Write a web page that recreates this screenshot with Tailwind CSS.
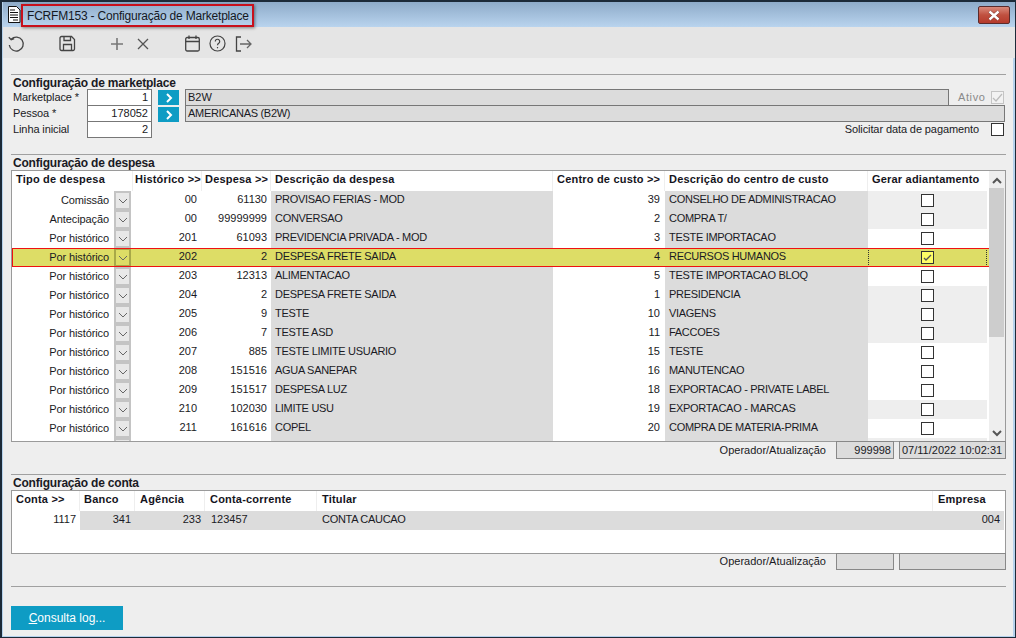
<!DOCTYPE html>
<html>
<head>
    <title>FCRFM153 - Configuração de Marketplace</title>
    <script src="https://cdn.jsdelivr.net/npm/@tailwindcss/browser@4"></script>
</head>
<body class="bg-[#eeeeee]">
<div class="w-[1016px] h-[638px] overflow-hidden flex flex-col border border-[#1c2a38] border-l-2 border-t-2 bg-[#b6d2ec] font-['Liberation_Sans',Arial,sans-serif] text-[11px] text-[#1a1a24]">
    <!-- title bar -->
    <header class="relative h-[25px] shrink-0 ml-px bg-gradient-to-b from-[#8eabc9] to-[#b9d4ee] flex items-center">
        <svg class="absolute left-[4px] top-[4px]" width="14" height="17" viewBox="0 0 14 17">
            <path d="M1.5 .5h8l3.500 3.500v12.500h-11.500z" fill="#fff" stroke="#111"/>
            <path d="M3 4h5M3 6.500h8M3 9h8M3 11.500h8M6 14h5" stroke="#111" stroke-width="1.200"/>
        </svg>
        <div class="absolute left-[18px] top-[2px] w-[233px] h-[23px] border-2 border-[#c8101c] shadow-[1px_1px_3px_rgba(0,0,0,.45)] flex items-center pl-[4px] text-[12px] tracking-[-.2px] text-[#14181f] whitespace-nowrap">FCRFM153 - Configuração de Marketplace</div>
        <div class="absolute left-[975px] top-[4px] w-[32px] h-[18px] rounded-[2px] border border-[#5b2b2b] bg-gradient-to-b from-[#d98a7c] via-[#c0503f] to-[#b53a2c] flex items-center justify-center">
            <svg width="14" height="11" viewBox="0 0 14 11"><path d="M2.500 1.500l9 8M11.500 1.500l-9 8" stroke="#4a2020" stroke-width="3.600" opacity=".6"/><path d="M2.500 1.500l9 8M11.500 1.500l-9 8" stroke="#fff" stroke-width="2.400"/></svg>
        </div>
    </header>

    <!-- toolbar -->
    <nav class="h-[31px] shrink-0 ml-px bg-[#e5e5e5] flex items-center pt-[2px]">
        <svg class="ml-[4px]" width="18" height="18" viewBox="0 0 18 18" fill="none" stroke="#444" stroke-width="1.300"><path d="M4.200 4.200A7 7 0 1 1 2.300 10"/><path d="M1.800 2.300l2.400 2.400 3-1"/></svg>
        <svg class="ml-[34px]" width="17" height="17" viewBox="0 0 17 17" fill="none" stroke="#444" stroke-width="1.300"><path d="M2.500 1.500h10l3 3v9.500a1.500 1.500 0 0 1-1.500 1.500h-11.500a1.500 1.500 0 0 1-1.500-1.500v-11a1.500 1.500 0 0 1 1.500-1.500z"/><path d="M5 1.500v4h6.500v-4M4.500 15.500v-6h8v6"/></svg>
        <svg class="ml-[33px]" width="16" height="16" viewBox="0 0 16 16" fill="none" stroke="#777" stroke-width="1.600"><path d="M8 2v12M2 8h12"/></svg>
        <svg class="ml-[11px]" width="14" height="14" viewBox="0 0 14 14" fill="none" stroke="#555" stroke-width="1.300"><path d="M2 2l10 10M12 2L2 12"/></svg>
        <svg class="ml-[35px]" width="15" height="17" viewBox="0 0 15 17" fill="none" stroke="#444" stroke-width="1.300"><rect x=".7" y="2.500" width="13.600" height="13.500" rx="1.500"/><path d="M.7 6.500h13.600M4 .5v3.500M11 .5v3.500"/></svg>
        <svg class="ml-[9px]" width="17" height="17" viewBox="0 0 17 17" fill="none" stroke="#444" stroke-width="1.200"><circle cx="8.500" cy="8.500" r="7.500"/><path d="M6.300 6.500a2.200 2.200 0 1 1 3.400 1.800c-.8.500-1.200 1-1.200 2"/><path d="M8.500 12v1.300"/></svg>
        <svg class="ml-[9px]" width="17" height="16" viewBox="0 0 17 16" fill="none" stroke="#444" stroke-width="1.300"><path d="M6 1H1.500v14H6"/><path d="M5 8h11M12 4l4 4-4 4" stroke="#666"/></svg>
    </nav>

    <main class="flex-1 ml-px mr-[2px] mb-px bg-[#eeeeee] pl-2 pr-[7px] pt-4">
        <!-- marketplace -->
        <div class="border-t border-[#a0a0a0] h-[15px] pl-[2px] font-bold text-[12px] tracking-[-.2px] leading-[16px]">Configuração de marketplace</div>
        <div class="h-[65px]">
            <div class="flex h-[16px] items-start">
                <span class="w-[76px] pl-[2px] tracking-[-.1px]">Marketplace *</span>
                <div class="w-[65px] h-[17px] border border-[#777] bg-white text-right pr-[3px] leading-[15px]">1</div>
                <div class="ml-[6px] mt-px w-[21px] h-[15px] bg-[#0e9cc4] flex items-center justify-center"><svg width="8" height="10" viewBox="0 0 8 10" fill="none" stroke="#fff" stroke-width="2"><path d="M2 1l4 4-4 4"/></svg></div>
                <div class="ml-[6px] w-[764px] h-[17px] border border-[#777] bg-[#dcdcdc] pl-[2px] leading-[15px]">B2W</div>
                <span class="ml-[9px] text-[#8a8a8a] tracking-[.6px]">Ativo</span>
                <div class="ml-[6px] mt-[2px] w-[13px] h-[13px] border border-[#c4c4c4] bg-[#f2f2f2] flex items-center justify-center"><svg width="11" height="9" viewBox="0 0 11 9" fill="none" stroke="#bbb" stroke-width="1.200"><path d="M1 5l3 3 6-7"/></svg></div>
            </div>
            <div class="flex h-[16px] items-start">
                <span class="w-[76px] pl-[2px] tracking-[-.1px]">Pessoa *</span>
                <div class="w-[65px] h-[17px] border border-[#777] bg-white text-right pr-[3px] leading-[15px]">178052</div>
                <div class="ml-[6px] mt-[2px] w-[21px] h-[15px] bg-[#0e9cc4] flex items-center justify-center"><svg width="8" height="10" viewBox="0 0 8 10" fill="none" stroke="#fff" stroke-width="2"><path d="M2 1l4 4-4 4"/></svg></div>
                <div class="ml-[6px] w-[820px] h-[17px] border border-[#777] bg-[#dcdcdc] pl-[2px] leading-[15px] tracking-[-.3px]">AMERICANAS (B2W)</div>
            </div>
            <div class="flex h-[17px] items-start">
                <span class="w-[76px] pl-[2px] tracking-[-.1px]">Linha inicial</span>
                <div class="w-[65px] h-[17px] border border-[#777] bg-white text-right pr-[3px] leading-[15px]">2</div>
                <span class="ml-auto tracking-[-.1px]">Solicitar data de pagamento</span>
                <div class="ml-[12px] mt-[2px] mr-[2px] w-[13px] h-[13px] border border-[#333] bg-white"></div>
            </div>
        </div>

        <!-- despesa -->
        <div class="border-t border-[#a0a0a0] h-[16px] pl-[2px] font-bold text-[12px] tracking-[-.2px] leading-[17px]">Configuração de despesa</div>
        <section class="relative h-[272px] border border-[#9a9a9a] bg-white overflow-hidden">
            <div class="grid grid-cols-[121px_69px_69px_282px_112px_203px_119px] h-[20px] font-bold text-[#14141c] leading-[17px] tracking-[.2px]">
                <div class="pl-[4px] border-r border-[#eeeeee]">Tipo de despesa</div>
                <div class="pl-[2px] border-r border-[#eeeeee] whitespace-nowrap">Histórico &gt;&gt;</div>
                <div class="pl-[3px] border-r border-[#eeeeee] whitespace-nowrap">Despesa &gt;&gt;</div>
                <div class="pl-[4px] border-r border-[#eeeeee]">Descrição da despesa</div>
                <div class="pl-[4px] border-r border-[#eeeeee] whitespace-nowrap">Centro de custo &gt;&gt;</div>
                <div class="pl-[4px] border-r border-[#eeeeee]">Descrição do centro de custo</div>
                <div class="pl-[4px] whitespace-nowrap">Gerar adiantamento</div>
            </div>
            <div id="despesas"></div>
            <!-- scrollbar -->
            <div class="absolute right-0 top-0 bottom-0 w-[16px] bg-[#eeeeee]">
                <svg class="absolute left-[3px] top-[6px]" width="10" height="8" viewBox="0 0 10 8" fill="none" stroke="#555" stroke-width="2"><path d="M1 6l4-4 4 4"/></svg>
                <div class="absolute left-0 top-[17px] w-[15px] h-[149px] bg-[#cdcdcd]"></div>
                <svg class="absolute left-[3px] top-[258px]" width="10" height="8" viewBox="0 0 10 8" fill="none" stroke="#555" stroke-width="2"><path d="M1 2l4 4 4-4"/></svg>
            </div>
        </section>
        <div class="-mt-px h-[18px] flex items-center relative">
            <span class="ml-auto">Operador/Atualização</span>
            <div class="ml-[10px] w-[58px] h-[18px] border border-[#888] bg-[#dcdcdc] text-right pr-[2px] leading-[16px]">999998</div>
            <div class="ml-[5px] w-[107px] h-[18px] border border-[#888] bg-[#dcdcdc] pl-[2px] leading-[16px]">07/11/2022 10:02:31</div>
        </div>

        <!-- conta -->
        <div class="mt-[15px] border-t border-[#a0a0a0] h-[16px] pl-[2px] font-bold text-[12px] tracking-[-.2px] leading-[16px]">Configuração de conta</div>
        <section class="h-[64px] border border-[#9a9a9a] bg-white">
            <div class="grid grid-cols-[68px_55px_70px_112px_616px_71px] h-[20px] font-bold text-[#14141c] leading-[17px] tracking-[.2px]">
                <div class="pl-[4px] border-r border-[#eeeeee]">Conta &gt;&gt;</div>
                <div class="pl-[4px] border-r border-[#eeeeee]">Banco</div>
                <div class="pl-[5px] border-r border-[#eeeeee]">Agência</div>
                <div class="pl-[5px] border-r border-[#eeeeee]">Conta-corrente</div>
                <div class="pl-[5px] border-r border-[#eeeeee]">Titular</div>
                <div class="pl-[5px]">Empresa</div>
            </div>
            <div class="grid grid-cols-[68px_55px_70px_112px_616px_71px] h-[19px] leading-[17px]">
                <div class="text-right pr-[4px]">1117</div>
                <div class="text-right pr-[4px] bg-[#dcdcdc]">341</div>
                <div class="text-right pr-[4px] bg-[#dcdcdc]">233</div>
                <div class="pl-[6px] bg-[#dcdcdc]">123457</div>
                <div class="pl-[5px] bg-[#dcdcdc] tracking-[-.3px]">CONTA CAUCAO</div>
                <div class="text-right pr-[4px] bg-[#dcdcdc]">004</div>
            </div>
        </section>
        <div class="-mt-px h-[17px] flex items-center">
            <span class="ml-auto">Operador/Atualização</span>
            <div class="ml-[10px] w-[58px] h-[17px] border border-[#888] bg-[#dcdcdc]"></div>
            <div class="ml-[5px] w-[107px] h-[17px] border border-[#888] bg-[#dcdcdc]"></div>
        </div>

        <div class="mt-[16px] border-t border-[#a0a0a0]"></div>
        <button class="mt-[19px] w-[112px] h-[24px] bg-[#0e9cc4] text-white text-[12px] block"><span class="underline">C</span>onsulta log...</button>
    </main>
</div>
<script>
    const despesas = [
        ['Comissão', '00', '61130', 'PROVISAO FERIAS - MOD', '39', 'CONSELHO DE ADMINISTRACAO', 1],
        ['Antecipação', '00', '99999999', 'CONVERSAO', '2', 'COMPRA T/', 1],
        ['Por histórico', '201', '61093', 'PREVIDENCIA PRIVADA - MOD', '3', 'TESTE IMPORTACAO', 0],
        ['Por histórico', '202', '2', 'DESPESA FRETE SAIDA', '4', 'RECURSOS HUMANOS', 2],
        ['Por histórico', '203', '12313', 'ALIMENTACAO', '5', 'TESTE IMPORTACAO BLOQ', 0],
        ['Por histórico', '204', '2', 'DESPESA FRETE SAIDA', '1', 'PRESIDENCIA', 1],
        ['Por histórico', '205', '9', 'TESTE', '10', 'VIAGENS', 1],
        ['Por histórico', '206', '7', 'TESTE ASD', '11', 'FACCOES', 1],
        ['Por histórico', '207', '885', 'TESTE LIMITE USUARIO', '15', 'TESTE', 0],
        ['Por histórico', '208', '151516', 'AGUA SANEPAR', '16', 'MANUTENCAO', 0],
        ['Por histórico', '209', '151517', 'DESPESA LUZ', '18', 'EXPORTACAO - PRIVATE LABEL', 0],
        ['Por histórico', '210', '102030', 'LIMITE USU', '19', 'EXPORTACAO - MARCAS', 1],
        ['Por histórico', '211', '161616', 'COPEL', '20', 'COMPRA DE MATERIA-PRIMA', 0],
        ['', '', '', '', '', '', 1],
    ];

    const chevron = '<svg width="10" height="6" viewBox="0 0 10 6" fill="none" stroke="#666"><path d="M1 1l4 4 4-4"/></svg>';
    const check = '<svg width="9" height="7" viewBox="0 0 9 7" fill="none" stroke="#555" stroke-width="1.300"><path d="M1 4l2 2 5-5"/></svg>';

    document.getElementById('despesas').innerHTML = despesas.map(([tipo, hist, desp, descr, centro, centroDescr, gerar]) => {
        const sel = gerar === 2;
        const gray = sel ? '' : 'bg-[#dcdcdc]';
        const gerarBg = sel ? '' : (gerar === 1 ? 'bg-[#eeeeee]' : 'bg-white');
        const btn = sel ? 'border-[#a8a848]' : 'border-[#c4c4c4] bg-[#e8e8e8]';
        const focus = sel ? 'border-x border-dotted border-[#333]' : '';
        const box = sel ? 'border-[#333] bg-[#ffff66]' : 'border-[#333] bg-white';
        return `<div class="relative grid grid-cols-[121px_69px_69px_282px_112px_203px_119px] h-[19px] leading-[16px] ${sel ? 'bg-[#dddd66] outline outline-1 -outline-offset-1 outline-[#ee1111]' : ''}">
            <div class="flex justify-end pr-[2px]"><span class="pr-[5px] pt-px tracking-[-.1px]">${tipo}</span><span class="w-[17px] h-[19px] border-2 ${btn} flex items-center justify-center">${chevron}</span></div>
            <div class="text-right pr-[5px]">${hist}</div>
            <div class="text-right pr-[4px]">${desp}</div>
            <div class="pl-[4px] tracking-[-.3px] ${gray}">${descr}</div>
            <div class="text-right pr-[5px]">${centro}</div>
            <div class="pl-[4px] tracking-[-.3px] ${gray}">${centroDescr}</div>
            <div class="flex items-center justify-center ${gerarBg} ${focus}"><span class="w-[13px] h-[13px] border ${box} flex items-center justify-center">${tipo ? (sel ? check : '') : ''}</span></div>
        </div>`;
    }).join('');
</script>
</body>
</html>
